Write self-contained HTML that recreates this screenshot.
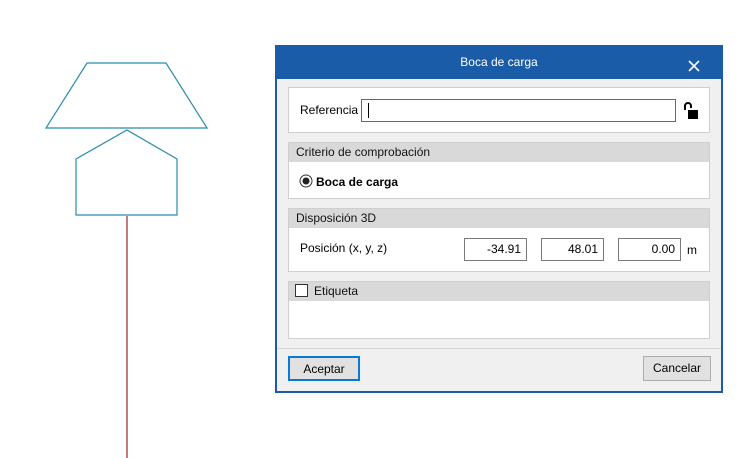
<!DOCTYPE html>
<html><head><meta charset="utf-8"><style>
*{box-sizing:border-box;margin:0;padding:0}
body{width:738px;height:458px;background:#fff;position:relative;overflow:hidden;font-family:"Liberation Sans",sans-serif;font-size:12px;color:#000}
.a{position:absolute}
.dlg{left:275px;top:45px;width:448px;height:348px;background:#f0f0f0;border:2px solid #1a5ca8;border-top:none}
.title{left:275px;top:45px;width:448px;height:34px;background:#1a5ca8;color:#fff;text-align:center;line-height:34px;font-size:12px}
.panel{background:#fff;border:1px solid #cfcfcf}
.hdr{background:#d9d9d9;height:19px;line-height:19px;padding-left:7px;font-size:12px;color:#111}
.inp{background:#fff;border:1px solid #7a7a7a;text-align:right;padding-right:5px;line-height:21px}
.btn{background:#e1e1e1;border:1px solid #adadad;text-align:center;line-height:22px}
</style></head><body>
<svg class="a" style="left:0;top:0" width="240" height="458">
<polygon points="87,63 166,63 207,128 46,128" fill="none" stroke="#2b8bb0" stroke-width="1.2"/>
<polygon points="127,130 177,159 177,215 76,215 76,159" fill="none" stroke="#2b8bb0" stroke-width="1.2"/>
<line x1="127" y1="216" x2="127" y2="458" stroke="#c87a80" stroke-width="2"/>
</svg>
<div class="a dlg"></div>
<div class="a title">Boca de carga</div>
<svg class="a" style="left:688px;top:60px" width="12" height="12"><path d="M1 1 L11 11 M11 1 L1 11" stroke="#fff" stroke-width="1.6"/></svg>
<div class="a panel" style="left:288px;top:87px;width:422px;height:46px"></div>
<div class="a" style="left:300px;top:103px">Referencia</div>
<div class="a" style="left:361px;top:99px;width:315px;height:23px;border:1px solid #1a7ad4;background:#fff"><div class="a" style="left:6px;top:3px;width:1px;height:15px;background:#000"></div></div>
<svg class="a" style="left:683px;top:102px" width="16" height="18"><path d="M2 8 V4 A3 3 0 0 1 8 4 V6" fill="none" stroke="#000" stroke-width="2"/><rect x="5" y="8" width="10" height="9" fill="#000"/></svg>
<div class="a panel" style="left:288px;top:142px;width:422px;height:57px"><div class="hdr">Criterio de comprobación</div></div>
<svg class="a" style="left:299px;top:174px" width="14" height="14"><circle cx="7" cy="7" r="6" fill="#fff" stroke="#333"/><circle cx="7" cy="7" r="3.5" fill="#222"/></svg>
<div class="a" style="left:316px;top:175px;font-weight:bold">Boca de carga</div>
<div class="a panel" style="left:288px;top:208px;width:422px;height:64px"><div class="hdr">Disposición 3D</div></div>
<div class="a" style="left:300px;top:241px">Posición (x, y, z)</div>
<div class="a inp" style="left:464px;top:238px;width:63px;height:23px">-34.91</div>
<div class="a inp" style="left:541px;top:238px;width:63px;height:23px">48.01</div>
<div class="a inp" style="left:618px;top:238px;width:63px;height:23px">0.00</div>
<div class="a" style="left:687px;top:243px">m</div>
<div class="a panel" style="left:288px;top:281px;width:422px;height:58px"><div class="hdr" style="padding-left:25px">Etiqueta</div></div>
<div class="a" style="left:295px;top:284px;width:13px;height:13px;border:1px solid #333;background:#fff"></div>
<div class="a" style="left:277px;top:348px;width:444px;height:1px;background:#d4d4d4"></div>
<div class="a btn" style="left:288px;top:356px;width:72px;height:25px;border:2px solid #0a78d7">Aceptar</div>
<div class="a btn" style="left:643px;top:356px;width:68px;height:25px">Cancelar</div>
</body></html>
